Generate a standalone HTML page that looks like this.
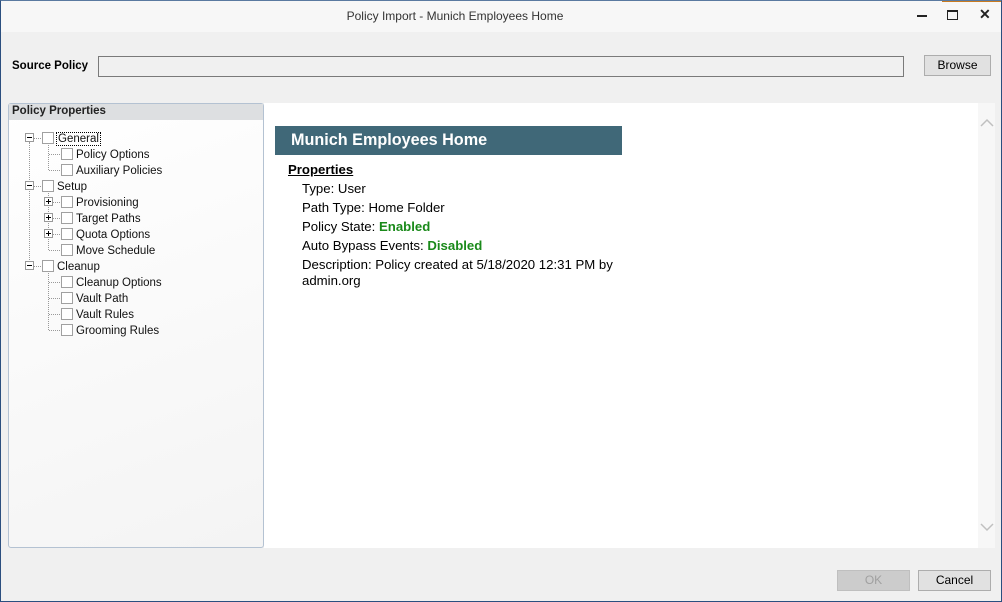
<!DOCTYPE html>
<html><head><meta charset="utf-8"><style>
*{margin:0;padding:0;box-sizing:border-box}
body{width:1002px;height:602px;overflow:hidden;background:#f0f0f0;font-family:"Liberation Sans",sans-serif;font-size:12px;color:#000;position:relative}
.a{position:absolute}
.win{left:0;top:0;width:1002px;height:602px;border:1px solid #2b4f7f;border-top-color:#5a7aa0}
.title{left:1px;top:1px;width:1000px;height:31px;background:#f7f7f7}
.tt{left:0;top:9px;width:910px;text-align:center;font-size:12px;color:#333}
.lbl{font-weight:bold;font-size:11.5px}
.inp{left:98px;top:56px;width:806px;height:21px;border:1px solid #7a7a7a;background:#f0f0f0}
.btn{border:1px solid #adadad;background:#e1e1e1;text-align:center;font-size:12px;line-height:19px}
.lp{left:8px;top:103px;width:256px;height:445px;border:1px solid #b4c2d2;border-radius:3px;background:linear-gradient(160deg,#fff,#f4f4f4)}
.lh{left:9px;top:104px;width:254px;height:16px;background:#dddfe1;font-weight:bold;font-size:11.5px;padding:1px 0 0 3px;color:#222}
.rp{left:264px;top:103px;width:731px;height:445px;background:#fff}
.sb{left:978px;top:103px;width:17px;height:445px;background:#f7f7f7}
.cb{width:12px;height:12px;border:1px solid #a0a0a0;background:#fff}
.ex{width:9px;height:9px;border:1px solid #999;background:#fff}
.ex:before{content:"";position:absolute;left:1px;top:3px;width:5px;height:1px;background:#000}
.ex.p:after{content:"";position:absolute;left:3px;top:1px;width:1px;height:5px;background:#000}
.t{font-size:11.5px;color:#111;margin-top:1px}
.dv{border-left:1px dotted #999}
.dh{border-top:1px dotted #999;height:0}
.hd{left:275px;top:126px;width:347px;height:29px;background:#406878;color:#fff;font-weight:bold;font-size:16.2px;padding:5px 0 0 16px}
.pr{font-size:13.2px;color:#000}
.g{color:#1a8a1a;font-weight:bold}
</style></head><body>
<div class="a title"></div>
<div class="a tt">Policy Import - Munich Employees Home</div>
<div class="a" style="left:917px;top:15px;width:10px;height:2px;background:#222"></div>
<div class="a" style="left:947px;top:10px;width:11px;height:10px;border:1px solid #222;border-top-width:2px"></div>
<div class="a" style="left:979px;top:6px;font-size:14px;font-weight:bold;color:#222">✕</div>
<div class="a" style="left:942px;top:0;width:60px;height:2px;background:#c87a20"></div>
<div class="a lbl" style="left:12px;top:60px">Source Policy</div>
<div class="a inp"></div>
<div class="a btn" style="left:924px;top:55px;width:67px;height:21px">Browse</div>
<div class="a lp"></div>
<div class="a lh">Policy Properties</div>
<div class="a rp"></div>
<div class="a sb"></div>
<svg class="a" style="left:980px;top:118px" width="14" height="10"><path d="M1 8 L7 2 L13 8" fill="none" stroke="#c0c0c0" stroke-width="1.5"/></svg>
<svg class="a" style="left:980px;top:522px" width="14" height="10"><path d="M1 2 L7 8 L13 2" fill="none" stroke="#c0c0c0" stroke-width="1.5"/></svg>

<div class="a dv" style="left:29px;top:142px;height:124px"></div>
<div class="a dv" style="left:48px;top:145px;height:25px"></div>
<div class="a dv" style="left:48px;top:193px;height:57px"></div>
<div class="a dv" style="left:48px;top:273px;height:57px"></div>

<div class="a ex" style="left:25px;top:133px"></div><div class="a dh" style="left:34px;top:138px;width:7px"></div>
<div class="a cb" style="left:42px;top:132px"></div>
<div class="a t" style="left:56px;top:131px;border:1px dotted #000;padding:0 1px">General</div>
<div class="a dh" style="left:49px;top:154px;width:11px"></div><div class="a cb" style="left:61px;top:148px"></div><div class="a t" style="left:76px;top:148px">Policy Options</div>
<div class="a dh" style="left:49px;top:170px;width:11px"></div><div class="a cb" style="left:61px;top:164px"></div><div class="a t" style="left:76px;top:164px">Auxiliary Policies</div>

<div class="a ex" style="left:25px;top:181px"></div><div class="a dh" style="left:34px;top:186px;width:7px"></div>
<div class="a cb" style="left:42px;top:180px"></div><div class="a t" style="left:57px;top:180px">Setup</div>
<div class="a ex p" style="left:44px;top:197px"></div><div class="a dh" style="left:53px;top:202px;width:7px"></div><div class="a cb" style="left:61px;top:196px"></div><div class="a t" style="left:76px;top:196px">Provisioning</div>
<div class="a ex p" style="left:44px;top:213px"></div><div class="a dh" style="left:53px;top:218px;width:7px"></div><div class="a cb" style="left:61px;top:212px"></div><div class="a t" style="left:76px;top:212px">Target Paths</div>
<div class="a ex p" style="left:44px;top:229px"></div><div class="a dh" style="left:53px;top:234px;width:7px"></div><div class="a cb" style="left:61px;top:228px"></div><div class="a t" style="left:76px;top:228px">Quota Options</div>
<div class="a dh" style="left:49px;top:250px;width:11px"></div><div class="a cb" style="left:61px;top:244px"></div><div class="a t" style="left:76px;top:244px">Move Schedule</div>

<div class="a ex" style="left:25px;top:261px"></div><div class="a dh" style="left:34px;top:266px;width:7px"></div>
<div class="a cb" style="left:42px;top:260px"></div><div class="a t" style="left:57px;top:260px">Cleanup</div>
<div class="a dh" style="left:49px;top:282px;width:11px"></div><div class="a cb" style="left:61px;top:276px"></div><div class="a t" style="left:76px;top:276px">Cleanup Options</div>
<div class="a dh" style="left:49px;top:298px;width:11px"></div><div class="a cb" style="left:61px;top:292px"></div><div class="a t" style="left:76px;top:292px">Vault Path</div>
<div class="a dh" style="left:49px;top:314px;width:11px"></div><div class="a cb" style="left:61px;top:308px"></div><div class="a t" style="left:76px;top:308px">Vault Rules</div>
<div class="a dh" style="left:49px;top:330px;width:11px"></div><div class="a cb" style="left:61px;top:324px"></div><div class="a t" style="left:76px;top:324px">Grooming Rules</div>

<div class="a hd">Munich Employees Home</div>
<div class="a pr" style="left:288px;top:162px;font-weight:bold;text-decoration:underline">Properties</div>
<div class="a pr" style="left:302px;top:181px">Type: User</div>
<div class="a pr" style="left:302px;top:200px">Path Type: Home Folder</div>
<div class="a pr" style="left:302px;top:219px">Policy State: <span class="g">Enabled</span></div>
<div class="a pr" style="left:302px;top:238px">Auto Bypass Events: <span class="g">Disabled</span></div>
<div class="a pr" style="left:302px;top:257px;line-height:16px">Description: Policy created at 5/18/2020 12:31 PM by<br>admin.org</div>

<div class="a btn" style="left:837px;top:570px;width:73px;height:21px;background:#cccccc;border-color:#bfbfbf;color:#a0a0a0">OK</div>
<div class="a btn" style="left:918px;top:570px;width:73px;height:21px">Cancel</div>
<div class="a win"></div>
</body></html>
